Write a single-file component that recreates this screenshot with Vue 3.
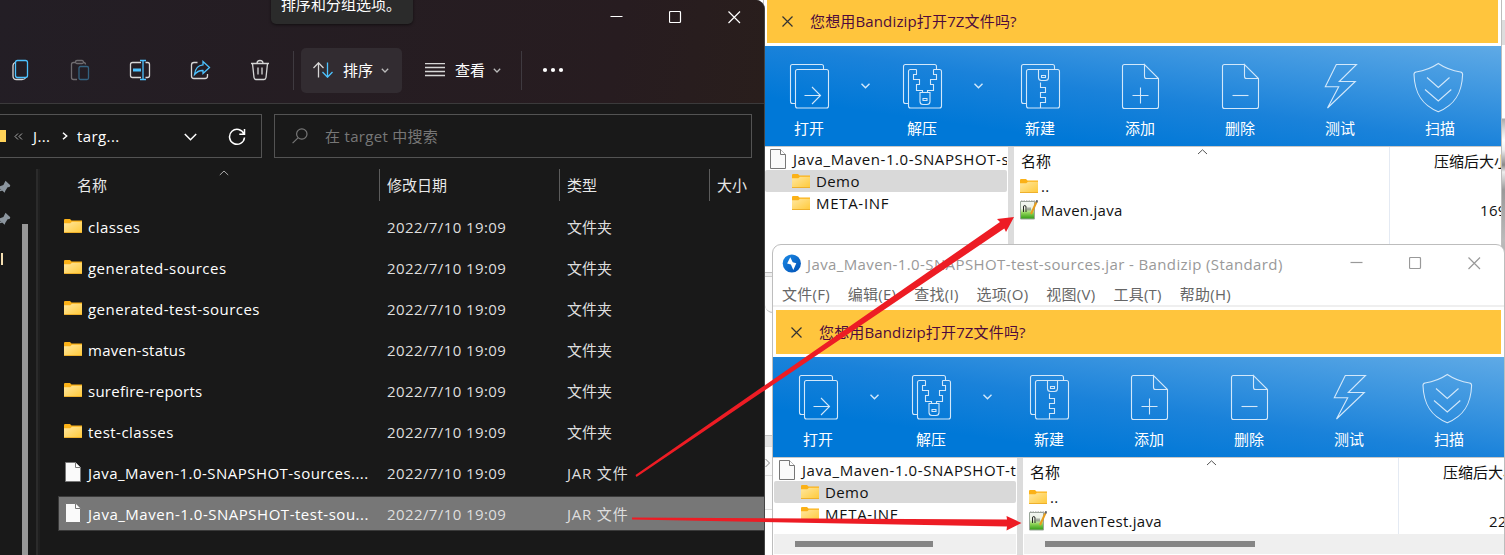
<script setup>
const entries = [
  { name: 'classes', folder: true },
  { name: 'generated-sources', folder: true },
  { name: 'generated-test-sources', folder: true },
  { name: 'maven-status', folder: true, tight: true },
  { name: 'surefire-reports', folder: true, tight: true },
  { name: 'test-classes', folder: true },
  { name: 'Java_Maven-1.0-SNAPSHOT-sources....', folder: false },
  { name: 'Java_Maven-1.0-SNAPSHOT-test-sou...', folder: false, selected: true },
]

const menus = ['文件(F)', '编辑(E)', '查找(I)', '选项(O)', '视图(V)', '工具(T)', '帮助(H)']

const sheets = 'M-13.5 17.5H-16.5a2 2 0 0 1-2-2V-19.5a2 2 0 0 1 2-2H12.5a2 2 0 0 1 2 2V-16.5'
const frontSheet = 'M-11.5-16.5H17.5a2 2 0 0 1 2 2V20a2 2 0 0 1-2 2H-11.5a2 2 0 0 1-2-2V-14.5a2 2 0 0 1 2-2Z'
const page = 'M4.5-21.5H-15.5a2 2 0 0 0-2 2V20.5a2 2 0 0 0 2 2H16.5a2 2 0 0 0 2-2V-7.5L4.5-21.5V-9.5a2 2 0 0 0 2 2H18.5'

const tools = [
  { label: '打开', arrow: true, paths: [sheets, frontSheet, 'M-4.5 9.5H11.5M3 1L11.5 9.5L3 18'] },
  {
    label: '解压',
    arrow: true,
    paths: [
      sheets,
      'M-5.5-16.5H-11.5a2 2 0 0 0-2 2V20a2 2 0 0 0 2 2H17.5a2 2 0 0 0 2-2V-14.5a2 2 0 0 0-2-2H11.5',
      'M-5.5-16.5V-11.5H-8.5V-6.5H-2.5V-1.5H-5.5V4.5H.5V6.5',
      'M11.5-16.5V-11.5H14.5V-6.5H8.5V-1.5H11.5V4.5H5.5V6.5',
      'M-2 6.5H8V15.5a3 3 0 0 1-3 3H1a3 3 0 0 1-3-3ZM1 12.5H5V14.5H1Z',
    ],
  },
  {
    label: '新建',
    paths: [
      sheets,
      frontSheet,
      'M-1.5-16.5V-8.5a3 3 0 0 0 3 3H5.5a3 3 0 0 0 3-3V-16.5M1.5-10.5H5.5V-8.5H1.5Z',
      'M.5-3.5V1.5H5.5V6.5H.5V11.5H5.5V16.5H.5V22',
    ],
  },
  { label: '添加', paths: [page, 'M-7.5 9.5H8.5M.5 1.5V17.5'] },
  { label: '删除', paths: [page, 'M-7.5 9.5H8.5'] },
  { label: '测试', paths: ['M-3.7-21.5H16.5L-.7-4.5H15.3L-12.5 22L-1.3.7H-14.7Z'] },
  {
    label: '扫描',
    paths: [
      'M-1.7-22.5C5-18 14-15 20.5-14Q22.7-13.6 22.6-11.5C22 7 15 19-1.7 25.7C-18.4 19-25.4 7-26-11.5Q-26.1-13.6-23.9-14C-17.4-15-8.4-18-1.7-22.5Z',
      'M-13-8.5L-1.7 1.5L9.5-8.5',
      'M-15 3.5L-1.7 15L11.3 3.5',
    ],
  },
]

const archives = [
  { key: 'main', root: 'Java_Maven-1.0-SNAPSHOT-s', file: 'Maven.java', size: '169' },
  {
    key: 'test',
    title: 'Java_Maven-1.0-SNAPSHOT-test-sources.jar - Bandizip (Standard)',
    root: 'Java_Maven-1.0-SNAPSHOT-t',
    file: 'MavenTest.java',
    size: '22',
  },
]
</script>

<template>
  <div class="desktop">
    <svg width="0" height="0" class="defs">
      <defs>
        <linearGradient id="folderFront" x1="0" y1="0" x2="1" y2="1">
          <stop offset="0" stop-color="#ffe7a0" />
          <stop offset="1" stop-color="#ffc938" />
        </linearGradient>
        <linearGradient id="javaGreen" x1="0" y1="0" x2="0" y2="1">
          <stop offset="0" stop-color="#f4f6f4" />
          <stop offset=".4" stop-color="#eaf2e2" />
          <stop offset=".65" stop-color="#8fd458" />
          <stop offset="1" stop-color="#2f9a12" />
        </linearGradient>
        <linearGradient id="boltBlue" x1="0" y1="0" x2="1" y2="1">
          <stop offset="0" stop-color="#1c8be6" />
          <stop offset="1" stop-color="#004fb4" />
        </linearGradient>
        <symbol id="folder" viewBox="0 0 18 14">
          <path d="M0 1.2Q0 0 1 0H6L7.5 1.6H18V5H0Z" fill="#fbb117" />
          <path d="M0 4.2H6.3L8 2.8H18V14H0Z" fill="url(#folderFront)" />
          <path d="M0 13.5H18" stroke="#eeb02c" />
        </symbol>
        <symbol id="doc" viewBox="0 0 18 20">
          <path d="M1.5.5H11.5L16.5 5.5V19.5H1.5Z" fill="#fafafa" stroke="#777" />
          <path d="M11.5.5V5.5H16.5" fill="#fff" stroke="#777" />
        </symbol>
        <symbol id="java" viewBox="0 0 18 20">
          <path d="M.5 1.5H14.5V19H.5Z" fill="url(#javaGreen)" stroke="#9aa79a" />
          <path d="M1 1H15" stroke="#999" stroke-dasharray="1.5 1" />
          <path d="M3.5 12V7Q3.5 5.5 4.7 5.5Q6 5.5 6 7V12" fill="none" stroke="#222" />
          <path d="M8 7.5V10.5M10 7.5V10.5" stroke="#444" stroke-width=".8" />
          <path d="M16.5 2L11 14" stroke="#e79c1c" stroke-width="2" />
          <path d="M17.3.3L16.3 2.5" stroke="#666" stroke-width="2" />
        </symbol>
      </defs>
    </svg>

    <div class="backdrop">
      <div class="stub one"></div>
      <div class="stub two"></div>
      <div class="stub three">
        <svg width="6" height="10" viewBox="0 0 6 10"><path d="M.5 1L4.5 5L.5 9" /></svg>
      </div>
    </div>
    <div class="edge"></div>

    <section v-for="a in archives" :key="a.key" class="archive" :class="a.key">
      <template v-if="a.title">
        <header class="a-title">
          <svg class="bolt" width="19" height="19" viewBox="0 0 19 19">
            <circle cx="9.8" cy="9.5" r="9.1" fill="url(#boltBlue)" />
            <path d="M8.3 3.2L5.1 9.6L8.9 10.4L11.3 16L14.3 9.2L10.7 8.3Z" fill="#fff" />
          </svg>
          <span class="a-name">{{ a.title }}</span>
          <span class="controls">
            <svg width="13" height="13" viewBox="0 0 13 13"><path d="M.5 5.5H12.5" /></svg>
            <svg width="13" height="13" viewBox="0 0 13 13"><rect x=".5" y=".5" width="11" height="11" rx="1" /></svg>
            <svg width="13" height="13" viewBox="0 0 13 13"><path d="M.5.5L12 12M12 .5L.5 12" /></svg>
          </span>
        </header>
        <nav class="a-menu"><span v-for="m in menus" :key="m">{{ m }}</span></nav>
      </template>
      <div class="notice">
        <svg width="11" height="11" viewBox="0 0 11 11"><path d="M.5.5L10.5 10.5M10.5.5L.5 10.5" /></svg>
        <span>您想用Bandizip打开7Z文件吗?</span>
      </div>
      <div class="a-tools">
        <template v-for="t in tools" :key="t.label">
          <div class="tool" :class="{ narrow: t.arrow }">
            <svg width="56" height="56" viewBox="-28 -28 56 56"><path v-for="p in t.paths" :key="p" :d="p" /></svg>
            <span>{{ t.label }}</span>
          </div>
          <div v-if="t.arrow" class="drop">
            <svg width="9" height="6" viewBox="0 0 9 6"><path d="M.5.7L4.5 4.7L8.5.7" /></svg>
          </div>
        </template>
      </div>
      <div class="a-body">
        <div class="tree">
          <div class="tree-view">
            <div class="node root"><svg width="18" height="20"><use href="#doc" /></svg><span>{{ a.root }}</span></div>
            <div class="node on"><svg width="18" height="14"><use href="#folder" /></svg><span>Demo</span></div>
            <div class="node wide"><svg width="18" height="14"><use href="#folder" /></svg><span>META-INF</span></div>
          </div>
          <div class="track"><i class="thumb-s"></i></div>
        </div>
        <div class="split"></div>
        <div class="files">
          <div class="f-cols">
            <div class="f-main">
              <svg class="caret" width="11" height="6" viewBox="0 0 11 6"><path d="M1 5L5.5.8L10 5" /></svg>
              <div class="f-head">名称</div>
              <div class="f-row"><svg width="18" height="14"><use href="#folder" /></svg><span class="dots">..</span></div>
              <div class="f-row"><svg width="18" height="20"><use href="#java" /></svg><span>{{ a.file }}</span></div>
            </div>
            <div class="f-size">
              <div class="f-head">压缩后大小</div>
              <div class="f-num">{{ a.size }}</div>
            </div>
          </div>
          <div class="track"><i class="thumb-l"></i></div>
        </div>
      </div>
    </section>

    <section class="explorer">
      <header class="e-top">
        <div class="controls">
          <svg width="13" height="13" viewBox="0 0 13 13"><path d="M.5 5.5H12.5" /></svg>
          <svg width="13" height="13" viewBox="0 0 13 13"><rect x=".5" y=".5" width="11" height="11" rx="1" /></svg>
          <svg width="13" height="13" viewBox="0 0 13 13"><path d="M.5.5L12 12M12 .5L.5 12" /></svg>
        </div>
        <div class="e-tools">
          <svg class="cmd" width="60" height="24" viewBox="-30 -12 60 24">
            <path d="M-5-7.5Q-7-6.5-7-4.5V6Q-7 9.5-3.5 9.5H2Q4.5 9.5 5.5 8" />
            <rect class="b" x="-4.5" y="-9.5" width="12" height="17" rx="2" />
          </svg>
          <svg class="cmd dim" width="60" height="24" viewBox="-30 -12 60 24">
            <path d="M-4.5-7.5H-6.5Q-8.5-7.5-8.5-5.5V7.5Q-8.5 9.5-6.5 9.5H-3M3.5-7.5Q5.5-7.5 5.5-5.5" />
            <rect x="-4.5" y="-9.5" width="8" height="3" rx="1.5" />
            <rect class="b" x="-1" y="-3.5" width="9.5" height="13" rx="1.5" />
          </svg>
          <svg class="cmd" width="60" height="24" viewBox="-30 -12 60 24">
            <path d="M1-7.5H-7.5Q-9.5-7.5-9.5-5.5V5.5Q-9.5 7.5-7.5 7.5H1M5.5-7.5H7.5Q9.5-7.5 9.5-5.5V5.5Q9.5 7.5 7.5 7.5H5.5" />
            <path class="b" d="M0-9.5H6M3-9.5V9.5M0 9.5H6" />
            <path class="b thick" d="M-7 0H1" />
          </svg>
          <svg class="cmd" width="60" height="24" viewBox="-30 -12 60 24">
            <path d="M-2.5-7.5H-6Q-8.5-7.5-8.5-5V6Q-8.5 8.5-6 8.5H5Q7.5 8.5 7.5 6V4" />
            <path class="b" d="M3-8.5L9.5-2.5L3 3.5V.5Q-2 .2-5.5 4.5Q-4.5-4.5 3-5.2Z" />
          </svg>
          <svg class="cmd" width="60" height="24" viewBox="-30 -12 60 24">
            <path d="M-9-6.5H9M-7.5-6.5L-6 7.5Q-5.7 9.5-4 9.5H4Q5.7 9.5 6 7.5L7.5-6.5M-3-6.5Q-3-9.5 0-9.5Q3-9.5 3-6.5M-2-2.5V4.5M2-2.5V4.5" />
          </svg>
          <i class="sep"></i>
          <div class="btn sort">
            <svg width="20" height="16" viewBox="0 0 20 16">
              <path d="M5.5 15.5V.8M.5 6L5.5.8L10.5 6" />
              <path class="b" d="M14.5.5V15.2M9.5 10L14.5 15.2L19.5 10" />
            </svg>
            <span>排序</span>
            <svg class="small" width="8" height="5" viewBox="0 0 8 5"><path d="M.8.8L4 4L7.2.8" /></svg>
          </div>
          <div class="btn view">
            <svg width="20" height="14" viewBox="0 0 20 14"><path d="M0 .5H20M0 4.5H20M0 8.5H20M0 12.5H20" /></svg>
            <span>查看</span>
            <svg class="small" width="8" height="5" viewBox="0 0 8 5"><path d="M.8.8L4 4L7.2.8" /></svg>
          </div>
          <i class="sep"></i>
          <svg class="more" width="22" height="6" viewBox="0 0 22 6"><circle cx="3" cy="3" r="2.1" /><circle cx="11" cy="3" r="2.1" /><circle cx="19" cy="3" r="2.1" /></svg>
        </div>
        <div class="tip">排序和分组选项。</div>
      </header>

      <div class="e-address">
        <div class="path">
          <i class="fold"></i>
          <svg class="laq" width="9" height="7" viewBox="0 0 9 7"><path d="M4 .5L1 3.5L4 6.5M8 .5L5 3.5L8 6.5" /></svg>
          <span class="p1">J...</span>
          <svg class="gt" width="6" height="8" viewBox="0 0 6 8"><path d="M1 .7L4.7 4L1 7.3" /></svg>
          <span class="p2">targ...</span>
          <svg class="dn" width="13" height="8" viewBox="0 0 13 8"><path d="M.8 1L6.5 6.7L12.2 1" /></svg>
          <svg class="re" width="18" height="18" viewBox="0 0 18 18"><path d="M16 6A7.5 7.5 0 1 0 16.5 9.5M16.5 1V6.2H11.3" /></svg>
        </div>
        <div class="search">
          <svg width="16" height="16" viewBox="0 0 16 16"><circle cx="9.8" cy="6" r="5.2" /><path d="M6 9.8L.6 15.2" /></svg>
          <span>在 target 中搜索</span>
        </div>
      </div>

      <div class="e-body">
        <aside>
          <svg class="pin" width="11" height="14" viewBox="0 0 11 14"><path d="M5.5.8L10.3 5.2L9.6 7L7.6 7.2L5.2 11L4.8 12.8L-1 8L0 6.3L3.4 5L4.4 3Z" /><path d="M1 9L-2 12L2.5 10.5Z" /></svg>
          <svg class="pin" width="11" height="14" viewBox="0 0 11 14"><path d="M5.5.8L10.3 5.2L9.6 7L7.6 7.2L5.2 11L4.8 12.8L-1 8L0 6.3L3.4 5L4.4 3Z" /><path d="M1 9L-2 12L2.5 10.5Z" /></svg>
          <i class="mark"></i>
          <i class="bar"></i>
        </aside>
        <div class="list">
          <div class="cols">
            <div class="c-name">名称<svg class="caret" width="10" height="6" viewBox="0 0 10 6"><path d="M.8 5L5 1L9.2 5" /></svg></div>
            <div class="c-date">修改日期</div>
            <div class="c-type">类型</div>
            <div class="c-size">大小</div>
          </div>
          <div v-for="e in entries" :key="e.name" class="slot">
            <div class="row" :class="{ selected: e.selected }">
              <span class="r-icon">
                <svg v-if="e.folder" width="18" height="14"><use href="#folder" /></svg>
                <svg v-else width="18" height="20"><use href="#doc" /></svg>
              </span>
              <span class="r-name" :class="{ tight: e.tight, loose: e.selected }">{{ e.name }}</span>
              <span class="r-date">2022/7/10 19:09</span>
              <span class="r-type" :class="{ jar: !e.folder }">{{ e.folder ? '文件夹' : 'JAR 文件' }}</span>
            </div>
          </div>
        </div>
      </div>
    </section>

    <svg class="arrows" width="1505" height="555" viewBox="0 0 1505 555">
      <path d="M635.5 475L1000 222L997 219L1014 217L1006 232L1004.3 228.5L636.5 477Z" />
      <path d="M632 517.5L1007 519.5L1006.5 516L1021.5 523L1006.5 530.5L1007 526.5L632 519.5Z" />
    </svg>
  </div>
</template>

<style>
html,
body {
  margin: 0;
  overflow: hidden;
}
</style>

<style scoped>
.desktop {
  position: relative;
  width: 1505px;
  height: 555px;
  overflow: hidden;
  background: #fff;
  font: 15px/22px 'Open Sans', 'Noto Sans CJK SC', sans-serif;
  white-space: nowrap;
  color: #111;
}
.desktop * {
  box-sizing: border-box;
}
svg {
  display: block;
  flex: none;
  fill: none;
}
i {
  display: block;
  flex: none;
}
.defs {
  position: absolute;
}
span,
.f-head {
  flex: none;
}

/* slivers of windows behind */
.backdrop {
  position: absolute;
  left: 765px;
  top: 244px;
  width: 10px;
  height: 311px;
  background: #fff;
}
.stub.one {
  margin-top: 12px;
  height: 57px;
  border-bottom: 1px solid #bbb;
  border-bottom-left-radius: 8px;
  background: linear-gradient(#eee 20px, #ccc 20px, #ccc 21px, #fafafa 21px);
}
.stub.two {
  margin-top: 122px;
  height: 11px;
  background: #e4e4e4;
  border-top: 1px solid #c5c5c5;
}
.stub.three {
  height: 64px;
  border-top: 1px solid #ddd;
  border-bottom: 1px solid #ddd;
  background: linear-gradient(#fafafa 28px, #ddd 28px, #ddd 29px, #fafafa 29px);
  padding-top: 11px;
}
.stub path {
  stroke: #888;
}
.edge {
  position: absolute;
  right: 0;
  top: 0;
  width: 4px;
  height: 555px;
  background: linear-gradient(#fff 20px, #ddd 20px, #ddd 45px, #fff 45px, #fff 118px, #aaa 119px, #ddd 130px, #fff 140px, #eee 150px, #888 165px, #eee 172px, #999 190px, #bbb 240px, #888 330px, #ddd 370px, #fff 420px);
}

/* archive windows */
.archive {
  position: absolute;
  display: flex;
  flex-direction: column;
  background: #fff;
  border: 1px solid #bdbdbd;
  overflow: hidden;
}
.archive.main {
  left: 763px;
  top: -5px;
  width: 739px;
  height: 278px;
}
.archive.test {
  left: 772px;
  top: 244px;
  width: 733px;
  height: 320px;
  border-radius: 9px 9px 0 0;
}
.a-title {
  display: flex;
  align-items: center;
  height: 37px;
  padding: 0 23px 0 9px;
  color: #999;
}
.a-name {
  margin-left: 6px;
  letter-spacing: 0.39px;
}
.controls {
  display: flex;
  gap: 46px;
  margin-left: auto;
}
.controls path,
.controls rect {
  stroke: #999;
  stroke-width: 1.2;
}
.a-menu {
  display: flex;
  gap: 18px;
  height: 25px;
  padding: 1px 9px;
  border-bottom: 2px solid #efefef;
  color: #666;
  letter-spacing: 0.25px;
}
.notice {
  display: flex;
  align-items: center;
  gap: 17px;
  height: 44px;
  margin: 3px 3px 3px;
  padding-left: 15px;
  background: #ffc53d;
  color: #4d0a3c;
  letter-spacing: 0.15px;
}
.notice path {
  stroke: #333;
  stroke-width: 1.2;
}
.a-tools {
  display: flex;
  height: 101px;
  flex: none;
  border-bottom: 1px solid #c8c8c8;
  background: linear-gradient(188deg, #5faae6, #1a82da 50%, #0078d7 76%);
  color: #fff;
}
.tool {
  display: flex;
  flex-direction: column;
  align-items: center;
  width: 100px;
  padding-top: 12px;
  flex: none;
}
.tool.narrow {
  width: 90px;
}
.tool span {
  margin-top: 3px;
}
.tool path {
  stroke: #d3e8fa;
  stroke-width: 1.1;
}
.drop {
  width: 23px;
  padding: 37px 0 0 7px;
}
.drop path {
  stroke: #d3e8fa;
  stroke-width: 1.4;
}
.a-body {
  display: flex;
  height: 97px;
  flex: none;
}
.tree {
  width: 243px;
  padding-left: 1px;
  flex: none;
}
.tree-view {
  height: 62px;
  overflow: hidden;
}
.main .tree-view,
.main .f-cols {
  height: 97px;
}
.node {
  display: flex;
  align-items: center;
  gap: 6px;
  height: 22px;
  padding-left: 27px;
  letter-spacing: 0.4px;
}
.node.wide {
  letter-spacing: 0.7px;
}
.node.root {
  height: 23px;
  padding-left: 4px;
  letter-spacing: 0.58px;
}
.node.on {
  background: #d9d9d9;
  border-radius: 2px;
}
.track {
  height: 20px;
  padding: 7px 0 0 21px;
  background: #efefef;
}
.tree .track {
  margin-top: 14px;
}
.main .track {
  display: none;
}
.track i {
  height: 6px;
  background: #868686;
}
.thumb-s {
  width: 138px;
}
.thumb-l {
  width: 210px;
}
.split {
  width: 6px;
  margin: 0 1px;
  background: #dcdcdc;
  flex: none;
}
.files {
  flex: 1;
  min-width: 0;
  overflow: hidden;
}
.f-cols {
  display: flex;
  height: 76px;
}
.f-main {
  position: relative;
  width: 375px;
  flex: none;
  padding-left: 5px;
  border-right: 1px solid #e4eaf3;
}
.caret {
  position: absolute;
}
.f-main .caret {
  left: 182px;
  top: 2px;
}
.f-main .caret path {
  stroke: #555;
}
.f-head {
  height: 27px;
  padding: 3px 0 0 1px;
}
.f-row {
  display: flex;
  align-items: center;
  gap: 3px;
  height: 24px;
  letter-spacing: 0.27px;
}
.f-size {
  padding-left: 43px;
}
.f-num {
  padding: 25px 0 0 47px;
  letter-spacing: 0.3px;
}

/* explorer */
.explorer {
  position: absolute;
  left: 0;
  top: 0;
  width: 765px;
  height: 555px;
  overflow: hidden;
  border-right: 1px solid #444;
  border-radius: 0 9px 0 0;
  background: #191919;
  color: #fff;
}
.e-top {
  height: 104px;
  background: linear-gradient(100deg, #231e25, #271c20 80%, #291e1c);
  border-bottom: 1px solid #3b3a3b;
}
.e-top .controls {
  height: 34px;
  align-items: center;
  justify-content: flex-end;
  padding-right: 23px;
}
.e-top .controls path,
.e-top .controls rect {
  stroke: #fff;
}
.e-tools {
  display: flex;
  align-items: center;
  height: 72px;
  margin: 0 0 0 -10px;
}
.e-tools path,
.e-tools rect {
  stroke: #d6d6d6;
  stroke-width: 1.3;
}
.e-tools .b {
  stroke: #4cc2ff;
}
.e-tools .b.thick {
  stroke-width: 3;
}
.e-tools .small path {
  stroke: #bbb;
}
.cmd.dim {
  opacity: 0.42;
}
.sep {
  width: 1px;
  height: 39px;
  margin: 0 7px 0 3px;
  background: #3f3a40;
}
.btn {
  display: flex;
  align-items: center;
  height: 45px;
  width: 101px;
  padding-left: 12px;
  border-radius: 5px;
}
.btn span {
  margin: 0 8px 0 10px;
}
.sort {
  background: #322c31;
}
.view {
  margin-left: 11px;
  width: 105px;
}
.view + .sep {
  margin: 0 20px 0 3px;
}
.more circle {
  fill: #fff;
}
.tip {
  position: absolute;
  left: 271px;
  top: -14px;
  width: 142px;
  height: 38px;
  padding: 7px 10px;
  border-radius: 5px;
  background: #2b2b2b;
  box-shadow: 0 1px 3px #0008;
}
.e-address {
  display: flex;
  gap: 12px;
  padding: 10px 0 0;
}
.path,
.search {
  display: flex;
  align-items: center;
  height: 44px;
  border: 1px solid #535353;
}
.path {
  width: 262px;
  border-left: 0;
  letter-spacing: 0.4px;
}
.path span,
.search span {
  margin-top: -1px;
}
.fold {
  width: 6px;
  height: 12px;
  margin-right: 8px;
  background: #ffd258;
}
.path path {
  stroke: #fff;
  stroke-width: 1.5;
}
.path .laq path {
  stroke: #aaa;
  stroke-width: 1;
}
.path .p1 {
  width: 18px;
  margin: -1px 11px 0 10px;
}
.path .p2 {
  width: 42px;
  margin-left: 9px;
}
.dn {
  margin: 2px 0 0 65px;
}
.re {
  margin: 1px 0 0 31px;
}
.search {
  width: 478px;
  padding-left: 17px;
  gap: 17px;
  color: #777;
  letter-spacing: 0.3px;
}
.search circle,
.search path {
  stroke: #777;
  stroke-width: 1.2;
}
.e-body {
  display: flex;
  margin-top: 11px;
  height: 386px;
}
aside {
  position: relative;
  width: 40px;
  flex: none;
  padding-top: 11px;
  background: linear-gradient(90deg, #191919 36px, #2b2b2b 36px, #2b2b2b 38px, #1f1f1f 38px);
}
.pin {
  margin-bottom: 18px;
}
.pin path {
  fill: #8b959e;
}
.mark {
  width: 2px;
  height: 12px;
  margin: 27px 0 0 1px;
  margin-top: 9px;
  transform: translateY(9px);
  background: #f3ddb0;
}
.bar {
  position: absolute;
  left: 22px;
  top: 55px;
  width: 6px;
  height: 340px;
  background: #979797;
}
.list {
  width: 725px;
}
.cols {
  display: flex;
  height: 32px;
  line-height: 32px;
  margin-bottom: 5px;
  padding-left: 37px;
  color: #e8e8e8;
}
.cols > div + div {
  padding-left: 7px;
  border-left: 1px solid #5c5c5c;
}
.c-name {
  position: relative;
  width: 302px;
}
.c-name .caret {
  left: 142px;
  top: 1px;
}
.c-name .caret path {
  stroke: #aaa;
}
.c-date {
  width: 180px;
}
.c-type {
  width: 150px;
}
.slot {
  height: 41px;
  padding: 3px 0 0 18px;
}
.row {
  display: flex;
  align-items: center;
  height: 35px;
  padding-left: 5px;
  border: 1px solid transparent;
  border-right: 0;
}
.row.selected {
  background: #777;
  border-color: #3a3a3a;
}
.r-icon {
  width: 24px;
  padding-bottom: 2px;
}
.r-name {
  width: 299px;
  letter-spacing: 0.46px;
}
.r-name.tight {
  letter-spacing: 0.25px;
}
.r-name.loose {
  letter-spacing: 0.52px;
}
.r-date {
  width: 180px;
  color: #dedede;
  letter-spacing: 0.4px;
}
.r-type {
  color: #dedede;
}
.r-type.jar {
  letter-spacing: 0.8px;
}

.arrows {
  position: absolute;
  left: 0;
  top: 0;
}
.arrows path {
  fill: #ed1c24;
}
</style>
